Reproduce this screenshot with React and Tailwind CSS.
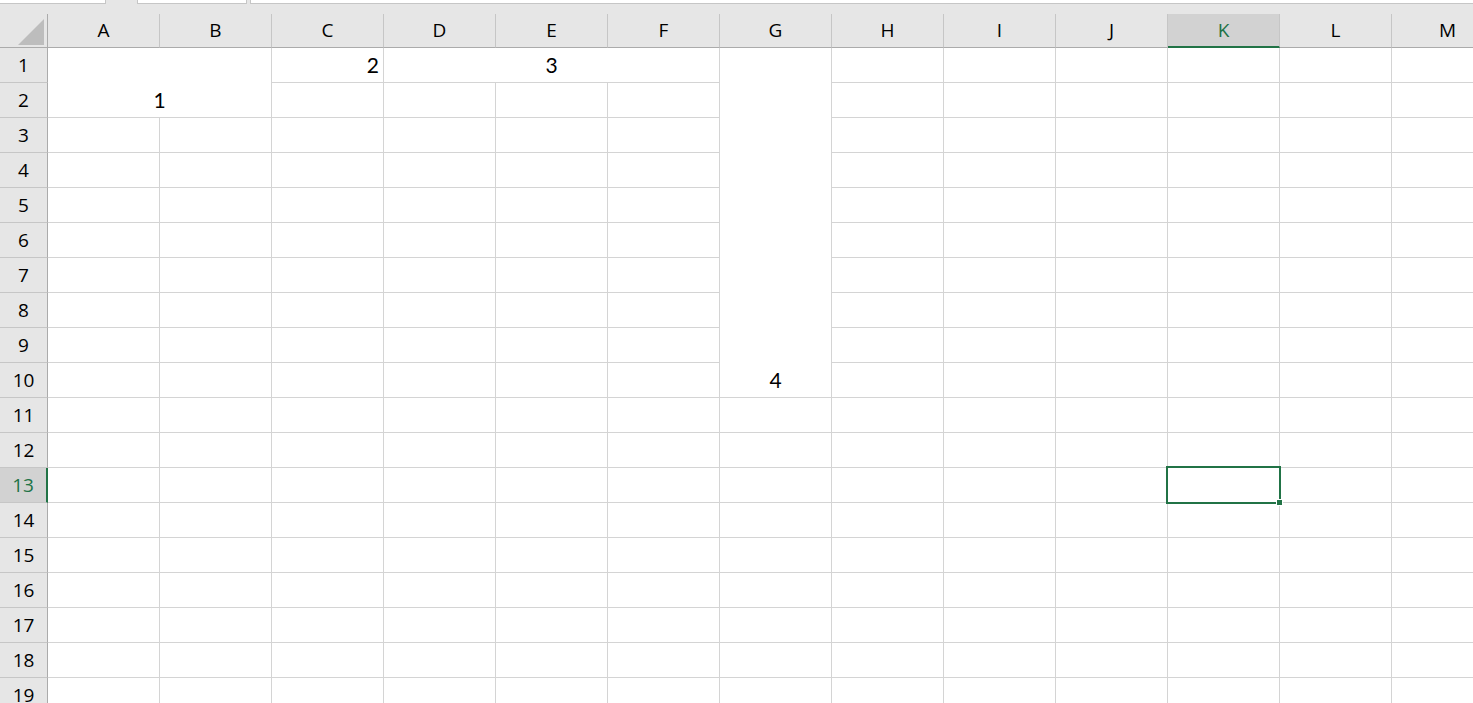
import React from "react";

const COLS = ["A", "B", "C", "D", "E", "F", "G", "H", "I", "J", "K", "L", "M"];
const ROWS = Array.from({ length: 19 }, (_, i) => i + 1);

const ACTIVE_COL = 10; // K
const ACTIVE_ROW = 13;

// merged ranges, keyed by top-left "row-col"
const MERGES = {
  "1-0": { cls: "col-span-2 row-span-2", rows: 2, cols: 2, value: "1", align: "center" },
  "1-3": { cls: "col-span-3", rows: 1, cols: 3, value: "3", align: "center" },
  "1-6": { cls: "row-span-10", rows: 10, cols: 1, value: "4", align: "center" },
};

const VALUES = {
  "1-2": { value: "2", align: "right" },
};

function coveredSet() {
  const s = new Set();
  Object.entries(MERGES).forEach(([key, m]) => {
    const [r, c] = key.split("-").map(Number);
    for (let i = 0; i < m.rows; i++)
      for (let j = 0; j < m.cols; j++) if (i || j) s.add(`${r + i}-${c + j}`);
  });
  return s;
}

function Cell({ value, align, cls = "" }) {
  return (
    <div className={`flex items-end bg-white border-r border-b border-[#d4d4d4] ${cls}`}>
      <div
        className={`h-[35px] w-full flex items-center px-[4px] text-[21px] text-black font-['Lato',sans-serif] ${
          align === "right" ? "justify-end" : "justify-center"
        }`}
      >
        {value}
      </div>
    </div>
  );
}

export default function App() {
  const covered = coveredSet();
  const cells = [];

  // header row
  cells.push(
    <div key="corner" className="relative bg-[#e6e6e6] border-r border-b border-[#ababab]">
      <div className="absolute left-[18px] top-[5px] w-0 h-0 border-l-[26px] border-l-transparent border-b-[26px] border-b-[#bdbdbd]" />
    </div>
  );
  COLS.forEach((c, i) => {
    const active = i === ACTIVE_COL;
    cells.push(
      <div
        key={`h-${c}`}
        className={`flex items-center justify-center border-r border-[#c6c6c6] text-[19px] font-['Open_Sans',sans-serif] ${
          active
            ? "bg-[#d2d2d2] text-[#217346] border-b-2 border-b-[#217346]"
            : "bg-[#e6e6e6] text-black border-b border-b-[#ababab]"
        }`}
      >
        {c}
      </div>
    );
  });

  ROWS.forEach((r) => {
    const active = r === ACTIVE_ROW;
    cells.push(
      <div
        key={`r-${r}`}
        className={`flex items-center justify-center border-b border-[#c6c6c6] text-[19px] font-['Open_Sans',sans-serif] ${
          active
            ? "bg-[#d2d2d2] text-[#217346] border-r-2 border-r-[#217346]"
            : "bg-[#e6e6e6] text-black border-r border-r-[#ababab]"
        }`}
      >
        {r}
      </div>
    );
    COLS.forEach((_, c) => {
      const key = `${r}-${c}`;
      if (covered.has(key)) return;
      const m = MERGES[key];
      if (m) {
        cells.push(<Cell key={key} value={m.value} align={m.align} cls={m.cls} />);
        return;
      }
      const v = VALUES[key];
      cells.push(<Cell key={key} value={v?.value} align={v?.align} />);
    });
  });

  return (
    <div className="w-[1473px] h-[703px] overflow-hidden bg-[#e6e6e6] flex flex-col">
      {/* formula bar edge */}
      <div className="h-[4px] flex bg-[#e6e6e6] shrink-0">
        <div className="w-[106px] bg-white border-r border-b border-[#c6c6c6]" />
        <div className="w-[31px]" />
        <div className="w-[110px] bg-white border-x border-b border-[#c6c6c6]" />
        <div className="w-[3px]" />
        <div className="flex-1 bg-white border-l border-b border-[#c6c6c6]" />
      </div>
      <div className="h-[10px] shrink-0" />

      {/* sheet */}
      <div className="relative">
        <div className="grid grid-cols-[48px_repeat(13,112px)] grid-rows-[34px_repeat(19,35px)]">
          {cells}
        </div>

        {/* active cell K13 */}
        <div className="absolute left-[1166px] top-[452px] w-[115px] h-[38px] border-2 border-[#217346]" />
        <div className="absolute left-[1276px] top-[485px] w-[7px] h-[7px] bg-[#217346] border border-white" />
      </div>
    </div>
  );
}
